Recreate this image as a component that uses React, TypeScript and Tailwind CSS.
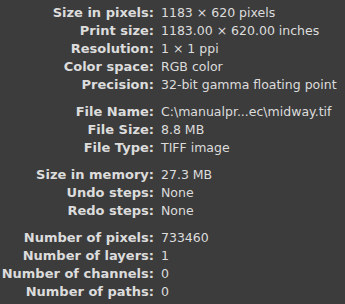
const groups: [string, string][][] = [
  [
    ['Size in pixels:', '1183 × 620 pixels'],
    ['Print size:', '1183.00 × 620.00 inches'],
    ['Resolution:', '1 × 1 ppi'],
    ['Color space:', 'RGB color'],
    ['Precision:', '32-bit gamma floating point'],
  ],
  [
    ['File Name:', 'C:\\manualpr...ec\\midway.tif'],
    ['File Size:', '8.8 MB'],
    ['File Type:', 'TIFF image'],
  ],
  [
    ['Size in memory:', '27.3 MB'],
    ['Undo steps:', 'None'],
    ['Redo steps:', 'None'],
  ],
  [
    ['Number of pixels:', '733460'],
    ['Number of layers:', '1'],
    ['Number of channels:', '0'],
    ['Number of paths:', '0'],
  ],
];

export default function App() {
  return (
    <div className="w-[345px] h-[304px] bg-[#3c3c3c] text-[#dcdcdc] pt-[4px] font-['DejaVu_Sans',sans-serif] text-[13px] leading-[18px] overflow-hidden">
      <div className="flex flex-col gap-[9px]">
        {groups.map((rows, gi) => (
          <div key={gi} className="grid grid-cols-[154px_1fr] gap-x-[7px]">
            {rows.map(([label, value]) => (
              <div key={label} className="contents">
                <div className="text-right font-bold whitespace-nowrap">{label}</div>
                <div className="whitespace-nowrap text-[12.5px]">{value}</div>
              </div>
            ))}
          </div>
        ))}
      </div>
    </div>
  );
}
